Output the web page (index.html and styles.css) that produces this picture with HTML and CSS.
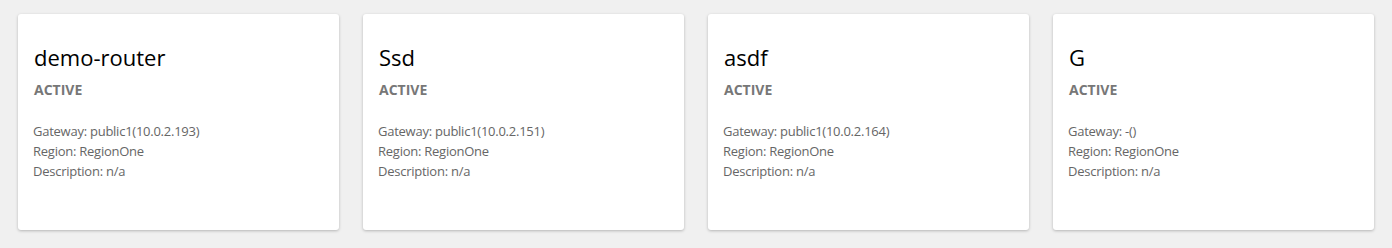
FILE: index.html
```html
<!DOCTYPE html>
<html lang="en">
<head>
<meta charset="utf-8">
<title>Routers</title>
<link rel="stylesheet" href="styles.css">
</head>
<body>
<main class="grid">
  <section class="card">
    <h2 class="card-title">demo-router</h2>
    <div class="card-status">ACTIVE</div>
    <div class="card-meta">
      <div>Gateway: public1(10.0.2.193)</div>
      <div>Region: RegionOne</div>
      <div>Description: n/a</div>
    </div>
  </section>
  <section class="card">
    <h2 class="card-title">Ssd</h2>
    <div class="card-status">ACTIVE</div>
    <div class="card-meta">
      <div>Gateway: public1(10.0.2.151)</div>
      <div>Region: RegionOne</div>
      <div>Description: n/a</div>
    </div>
  </section>
  <section class="card">
    <h2 class="card-title">asdf</h2>
    <div class="card-status">ACTIVE</div>
    <div class="card-meta">
      <div>Gateway: public1(10.0.2.164)</div>
      <div>Region: RegionOne</div>
      <div>Description: n/a</div>
    </div>
  </section>
  <section class="card">
    <h2 class="card-title">G</h2>
    <div class="card-status">ACTIVE</div>
    <div class="card-meta">
      <div>Gateway: -()</div>
      <div>Region: RegionOne</div>
      <div>Description: n/a</div>
    </div>
  </section>
</main>
</body>
</html>
```
FILE: styles.css
```css
html, body {
  margin: 0;
  padding: 0;
  background: #f0f0f0;
  font-family: "Open Sans", "Noto Sans", sans-serif;
}
.grid {
  display: grid;
  grid-template-columns: repeat(4, 1fr);
  gap: 24px;
  padding: 14px 18px;
}
.card {
  background: #fff;
  border-radius: 3px;
  box-shadow: 0 1px 3px rgba(0, 0, 0, 0.25);
  height: 216px;
  box-sizing: border-box;
  padding: 28px 16px 16px 16px;
}
.card-title {
  margin: 0;
  font-size: 22px;
  font-weight: 400;
  line-height: 30px;
  color: #000;
}
.card-status {
  margin-top: 8px;
  font-size: 14px;
  font-weight: 700;
  line-height: 20px;
  color: #777;
}
.card-meta {
  margin-top: 21px;
  margin-left: -1px;
  font-size: 13px;
  letter-spacing: -0.25px;
  line-height: 20px;
  color: #666;
}
```
